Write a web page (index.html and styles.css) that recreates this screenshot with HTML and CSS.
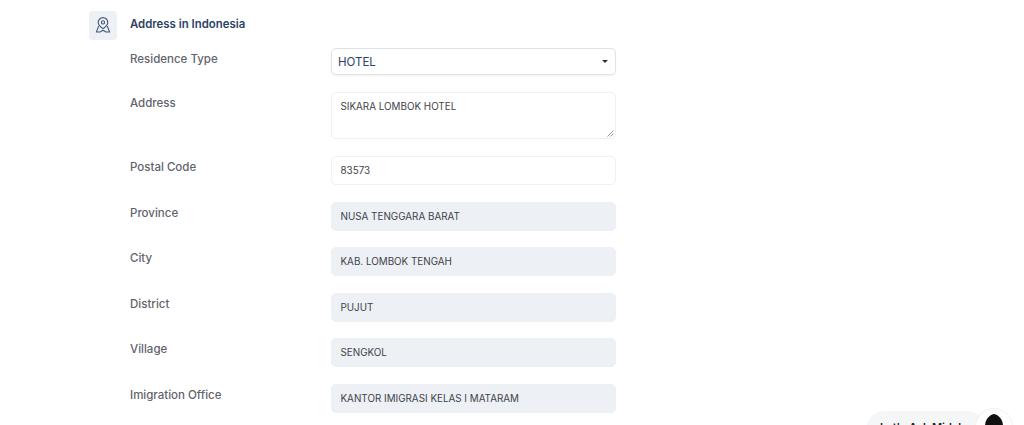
FILE: index.html
```html
<!DOCTYPE html>
<html lang="en">
<head>
    <meta charset="UTF-8">
    <meta name="viewport" content="width=device-width, initial-scale=1.0">
    <title>Address in Indonesia</title>
    <link rel="stylesheet" href="styles.css">
</head>
<body>
    <div class="section">
        <div class="section-head">
            <div class="section-icon">
                <svg width="16" height="17" viewBox="0 0 16 17" fill="none" stroke="#46597a" stroke-width="1.1" stroke-linejoin="round" stroke-linecap="round">
                    <path d="M8 11.6 C5.2 9.6 3.2 7.8 3.2 5.4 A4.8 4.8 0 0 1 12.8 5.4 C12.8 7.8 10.8 9.6 8 11.6 Z"/>
                    <circle cx="8" cy="5.4" r="1.6"/>
                    <path d="M3.6 9.4 L1.4 15 L5 15 L8 13.2 L11 15 L14.6 15 L12.4 9.4"/>
                </svg>
            </div>
            <h4 class="section-title">Address in Indonesia</h4>
        </div>

        <form class="address-form">
            <label class="row-label">Residence Type</label>
            <div class="field-select">
                <span>HOTEL</span>
                <span class="caret"></span>
            </div>

            <label class="row-label">Address</label>
            <div class="field-textarea">
                SIKARA LOMBOK HOTEL
                <svg class="grip" width="7" height="7" viewBox="0 0 7 7" stroke="#777" stroke-width="0.8">
                    <path d="M0.5 6.5 L6.5 0.5 M3.5 6.5 L6.5 3.5"/>
                </svg>
            </div>

            <label class="row-label">Postal Code</label>
            <div class="field">83573</div>

            <label class="row-label">Province</label>
            <div class="field disabled">NUSA TENGGARA BARAT</div>

            <label class="row-label">City</label>
            <div class="field disabled">KAB. LOMBOK TENGAH</div>

            <label class="row-label">District</label>
            <div class="field disabled">PUJUT</div>

            <label class="row-label">Village</label>
            <div class="field disabled">SENGKOL</div>

            <label class="row-label">Imigration Office</label>
            <div class="field disabled">KANTOR IMIGRASI KELAS I MATARAM</div>
        </form>
    </div>

    <div class="chat-widget">
        <div class="chat-pill">Let's Ask Midah</div>
        <div class="chat-avatar">
            <svg width="18" height="24" viewBox="0 0 18 24">
                <path d="M9 0 C14 1 18 6 18 12 C18 19 14 24 9 24 C4 24 0 19 0 12 C0 6 4 1 9 0 Z" fill="#111"/>
            </svg>
        </div>
    </div>
</body>
</html>
```

FILE: styles.css
```css
html, body {
    height: 425px;
    overflow: hidden;
}
body {
    font-family: 'Inter', 'Liberation Sans', sans-serif;
    background-color: #ffffff;
    margin: 0;
    padding: 0;
    position: relative;
}
.section {
    padding: 11px 0 0 89px;
}
.section-head {
    display: flex;
    align-items: center;
    gap: 13px;
    height: 29px;
}
.section-icon {
    width: 28px;
    height: 29px;
    background-color: #edf0f5;
    border-radius: 4px;
    display: flex;
    align-items: center;
    justify-content: center;
}
.section-title {
    margin: 0 0 3px;
    font-size: 11.4px;
    font-weight: 600;
    color: #2c4266;
}
.address-form {
    display: grid;
    grid-template-columns: 201px 285px;
    row-gap: 16.6px;
    margin: 8px 0 0 41px;
}
.row-label {
    font-size: 11.5px;
    font-weight: 500;
    line-height: 15px;
    color: #5f646d;
    padding-top: 4px;
}
.field, .field-select, .field-textarea {
    box-sizing: border-box;
    font-size: 9.85px;
    color: #3f4349;
    background-color: #fff;
    border: 1px solid #eef0f4;
    border-radius: 5px;
    padding: 0 8.5px;
}
.field {
    height: 29px;
    line-height: 27px;
}
.field.disabled {
    background-color: #edf0f5;
    border-color: #edf0f5;
}
.field-select {
    height: 27px;
    display: flex;
    align-items: center;
    justify-content: space-between;
    font-size: 11.5px;
    color: #2c4266;
    border-color: #dfe2e8;
    box-shadow: 0 1px 2px rgba(0, 0, 0, 0.06);
    padding: 0 7px 0 6px;
}
.caret {
    width: 0;
    height: 0;
    border-left: 3px solid transparent;
    border-right: 3px solid transparent;
    border-top: 3.5px solid #333;
}
.field-textarea {
    position: relative;
    height: 47.8px;
    padding-top: 7px;
    line-height: 13px;
}
.grip {
    position: absolute;
    right: 1px;
    bottom: 1px;
}
.chat-widget {
    position: absolute;
    top: 408px;
    right: 11px;
    display: flex;
    align-items: flex-start;
}
.chat-pill {
    width: 120px;
    height: 38px;
    margin-top: 3px;
    box-sizing: border-box;
    padding: 9px 0 0 14px;
    background-color: #f5f6f8;
    border-radius: 19px;
    font-size: 11px;
    font-weight: 600;
    color: #222;
    white-space: nowrap;
    overflow: hidden;
}
.chat-avatar {
    width: 38px;
    height: 38px;
    margin-left: -11px;
    background-color: #fff;
    border: 1px solid #eef0f4;
    border-radius: 50%;
    display: flex;
    align-items: flex-start;
    justify-content: center;
    padding-top: 5px;
    box-sizing: border-box;
    position: relative;
}
```
